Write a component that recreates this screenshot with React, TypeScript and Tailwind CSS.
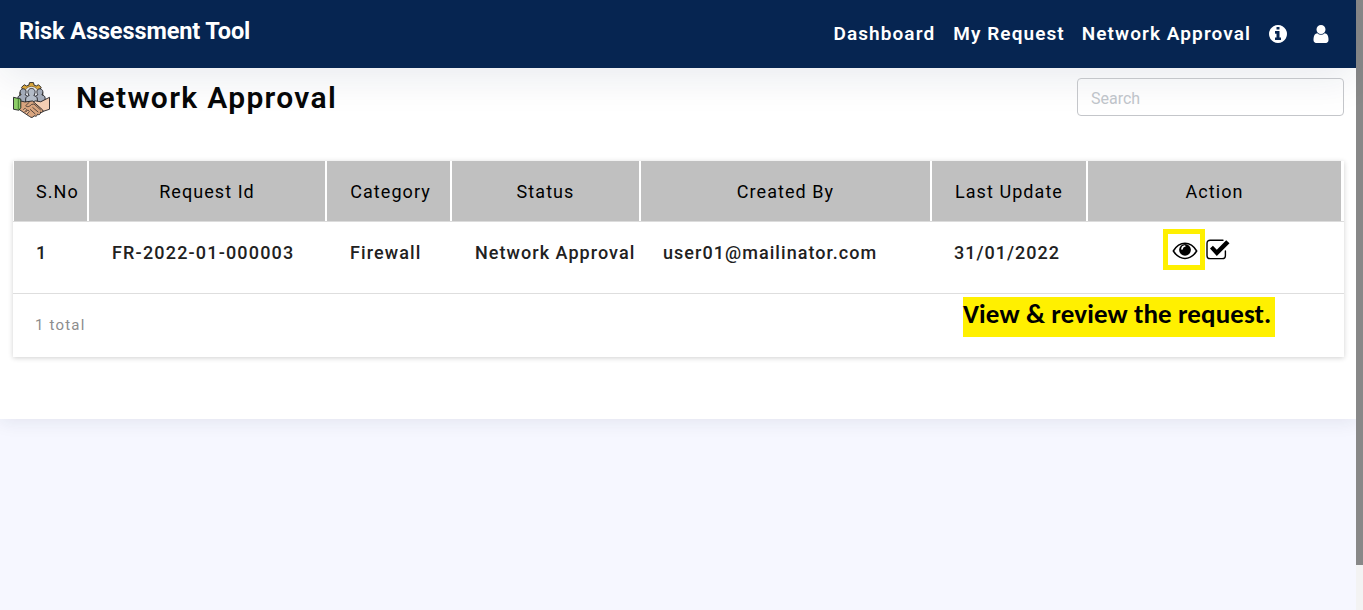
import React from 'react';

type IconProps = { className?: string };

const InfoIcon = ({ className }: IconProps) => (
  <svg className={className} viewBox="128 128 1536 1536" fill="currentColor">
    <path d="M1152 1376v-160q0-14-9-23t-23-9h-96v-512q0-14-9-23t-23-9h-320q-14 0-23 9t-9 23v160q0 14 9 23t23 9h96v320h-96q-14 0-23 9t-9 23v160q0 14 9 23t23 9h448q14 0 23-9t9-23zm-128-896v-160q0-14-9-23t-23-9h-192q-14 0-23 9t-9 23v160q0 14 9 23t23 9h192q14 0 23-9t9-23zm640 416q0 209-103 385.5t-279.5 279.5-385.5 103-385.5-103-279.5-279.5-103-385.5 103-385.5 279.5-279.5 385.5-103 385.5 103 279.5 279.5 103 385.5z" />
  </svg>
);

const UserIcon = ({ className }: IconProps) => (
  <svg className={className} viewBox="0 128 1280 1536" fill="currentColor">
    <path d="M1280 1399q0 109-62.5 187t-150.5 78h-854q-88 0-150.5-78t-62.5-187q0-85 8.5-160.5t31.5-152 58.5-131 94-89 134.5-34.5q131 128 313 128t313-128q76 0 134.5 34.5t94 89 58.5 131 31.5 152 8.5 160.5zm-256-887q0 159-112.5 271.5t-271.5 112.5-271.5-112.5-112.5-271.5 112.5-271.5 271.5-112.5 271.5 112.5 112.5 271.5z" />
  </svg>
);

const EyeIcon = ({ className }: IconProps) => (
  <svg className={className} viewBox="0 0 26 18" fill="none">
    <path d="M1.300 9C4.200 4.200 8.300 1.300 13 1.300S21.800 4.200 24.700 9c-3 4.700-7 7.400-11.700 7.400S4.300 13.700 1.300 9z" stroke="#000" strokeWidth="1.500" strokeLinejoin="round" />
    <circle cx="13" cy="7.800" r="5.900" fill="#000" />
    <path d="M10 6.900c.2-1.700 1.200-2.700 2.700-2.900" stroke="#fff" strokeWidth="1.700" strokeLinecap="round" />
  </svg>
);

const CheckIcon = ({ className }: IconProps) => (
  <svg className={className} viewBox="0 0 24 21" fill="none">
    <path d="M17 1.200H4.200C2.200 1.200 1 2.400 1 4.400v12c0 2 1.200 3.200 3.200 3.200h12c2 0 3.200-1.200 3.200-3.200v-4.500" stroke="#000" strokeWidth="1.400" strokeLinecap="round" />
    <path d="M4 9.600l2.900-2.800 3.900 3.900L20.200 1.200l3.300 3.100L10.800 17z" fill="#000" />
  </svg>
);

const TeamIcon = ({ className }: IconProps) => (
  <svg className={className} viewBox="0 0 38 38" fill="none" stroke="#1c1c20" strokeWidth="0.9" strokeLinejoin="round">
    <path d="M17 .6h4l.7 2.600 2.200.9 2.300-1.300 2.700 2.700-1.300 2.400 1 2.200 2 .6v8H7v-8l2.200-.6.9-2.200-1.300-2.400 2.700-2.700 2.400 1.300 2.400-.9z" fill="#e0ab3c" />
    <circle cx="19" cy="12" r="7.500" fill="#eceff3" stroke="#8a6d32" />
    <path d="M5 21v-4.500c0-2 1.500-2.700 3.300-3.300-2.400-4 .1-6.200 2.200-6.200s4.300 2.200 2 6.200c1.700.5 2.800 1.400 2.800 3.300V22zM33 21v-4.500c0-2-1.500-2.700-3.300-3.300 2.400-4-.1-6.200-2.200-6.200s-4.300 2.200-2 6.200c-1.700.5-2.800 1.400-2.800 3.300V22z" fill="#a6aebb" />
    <path d="M13 22v-4.500c0-2.200 1.700-3 3.600-3.600-3-4.300-.3-7.300 2.400-7.300s5.400 3 2.400 7.300c1.900.6 3.600 1.400 3.600 3.600V22z" fill="#b7bfca" />
    <path d="M37.500 15.700V28L27 31.500 17 22l6-2.600 5.500.9z" fill="#f5d0b5" />
    <path d="M6 19l6.200 1.500L20 19.500l10.500 9.200c1.200 1.700-.7 3.300-2.400 2.200.8 2-1.400 3.400-3 2.200 0 1.900-2 2.600-3.500 1.600-.9 1.900-2.800 2.300-4.500.8L6 28z" fill="#d9a57f" />
    <path d="M17 20.500l-4 3.800c1.500 1.900 4.200.9 6-1.200l2.500-.5 7 6.200M20 26l6 5M17.500 28l5.500 5" strokeWidth="0.700" />
    <path d="M.5 15.700L8 17.500v9L6 29l-5.500-1z" fill="#8fd06a" />
    <path d="M5.500 17v11.500" stroke="#4d8a36" strokeWidth="1.200" />
    <path d="M10.500 28.500l2-1.500 1.500 1.500-2.500 2.700M13 31l2.200-2.300 1.500 1.500-2.400 3" fill="#efbd98" strokeWidth="0.700" />
  </svg>
);

const columns = ['S.No', 'Request Id', 'Category', 'Status', 'Created By', 'Last Update', 'Action'];

const grid = 'grid grid-cols-[76px_238px_125px_189px_291px_156px_255px]';

export default function App() {
  return (
    <div className="flex h-[610px] w-[1363px] overflow-hidden bg-[#f6f7ff] font-['Roboto',sans-serif]">
      <div className="flex w-[1356px] flex-col">
        <header className="z-10 flex h-[68px] shrink-0 justify-between bg-[#062551] pr-[27px] pl-[19px] text-white shadow-[0_10px_40px_rgba(6,37,81,0.09)]">
          <div className="pt-[14px] text-[23.5px] leading-[35px] font-bold tracking-[-0.1px] whitespace-nowrap">Risk Assessment Tool</div>
          <nav className="flex h-[67px] items-center text-[19px] leading-[28px] font-semibold tracking-[1.08px] whitespace-nowrap">
            <a className="mr-[18px] pt-px">Dashboard</a>
            <a className="mr-[17px] pt-px">My Request</a>
            <a className="mr-[18px] pt-px">Network Approval</a>
            <InfoIcon className="mr-[26px] h-[18px] w-[18px]" />
            <UserIcon className="h-[18px] w-[16px]" />
          </nav>
        </header>

        <main className="flex h-[351px] shrink-0 flex-col bg-white pr-[11px] pl-[13px] shadow-[0_4px_16px_rgba(30,35,80,0.08)]">
          <div className="flex h-[93px] items-start justify-between pr-px">
            <div className="flex">
              <TeamIcon className="mt-[14px] h-[37px] w-[37px]" />
              <h1 className="mt-[10px] ml-[26px] text-[30px] leading-[40px] font-[560] tracking-[1.32px] whitespace-nowrap text-[#070808]">Network Approval</h1>
            </div>
            <input
              className="relative z-20 mt-[10px] h-[38px] w-[267px] rounded border border-[#c4c6ca] bg-transparent px-[13px] pt-[3px] text-[16px] placeholder:text-[#bfc4ca]"
              placeholder="Search"
            />
          </div>

          <section className="h-[196px] w-[1331px] shrink-0 bg-white shadow-[0_1px_5px_rgba(0,0,0,0.19)]">
            <div className={`${grid} h-[61px] border-b border-[#dcdcdc] text-[18px] tracking-[1.06px] text-black`}>
              {columns.map((name) => (
                <div key={name} className="flex items-center justify-center border-r-2 border-white bg-[#c0c0c0] bg-clip-padding pt-px first:justify-start first:border-l first:pl-[22px] nth-3:pl-[4px]">
                  {name}
                </div>
              ))}
            </div>
            <div className={`${grid} h-[72px] border-b border-[#dedede] pt-[19px] text-[18px] leading-[24px] font-medium whitespace-nowrap text-[#212121]`}>
              <div className="pl-[23px]">1</div>
              <div className="pl-[23px] tracking-[1.18px]">FR-2022-01-000003</div>
              <div className="pl-[23px] tracking-[1.1px]">Firewall</div>
              <div className="pl-[23px] tracking-[1.05px]">Network Approval</div>
              <div className="pl-[22px] tracking-[1.05px]">user01@mailinator.com</div>
              <div className="pl-[22px] tracking-[1px]">31/01/2022</div>
              <div className="-mt-[12px] flex pl-[75px]">
                <div className="flex h-[41px] w-[42px] items-center justify-center border-5 border-[#fff000] pt-[2px]">
                  <EyeIcon className="ml-px h-[18px] w-[26px] shrink-0" />
                </div>
                <CheckIcon className="mt-[10px] ml-px h-[21px] w-[24px]" />
              </div>
            </div>
            <div className="flex h-[63px] justify-between pr-[69px] pl-[22px]">
              <div className="pt-[20px] text-[15px] leading-[22px] tracking-[1.2px] text-[#8d8d8d]">1 total</div>
              <div className="mt-[3px] h-[40px] w-[312px] bg-[#fff000] font-['Carlito','Lato',sans-serif] text-[27px] leading-[34px] font-bold tracking-[0.12px] whitespace-nowrap text-black">
                View &amp; review the request.
              </div>
            </div>
          </section>
        </main>
      </div>
      <div className="w-[7px] bg-[#f3f3f3]">
        <div className="h-[565px] bg-[#888888]" />
      </div>
    </div>
  );
}
